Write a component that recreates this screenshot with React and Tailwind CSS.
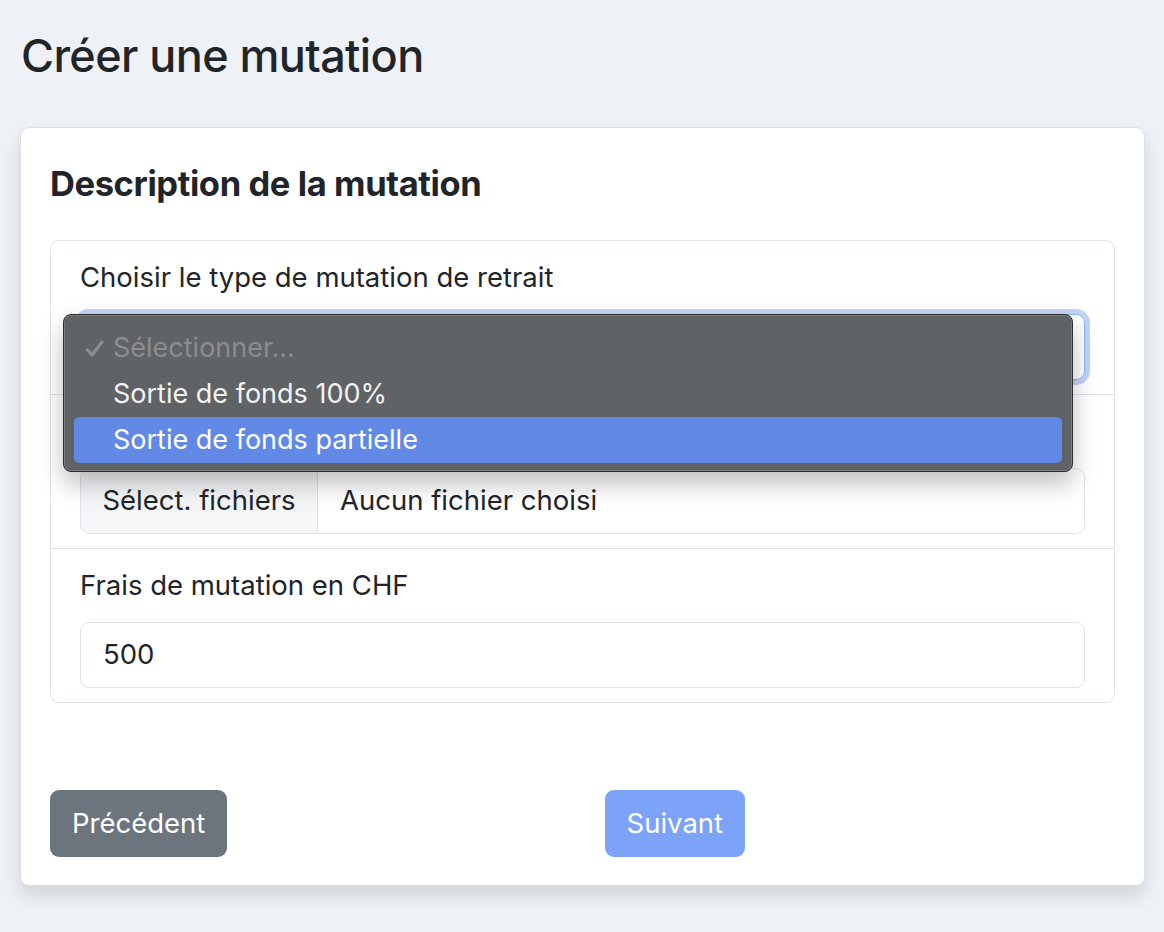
import React from "react";

export default function App() {
  return (
    <div className="min-h-[932px] w-[1164px] bg-[#eef1f5] text-[#212529] font-['Inter',sans-serif]">
      <div className="pl-[21px] pt-[28px]">
        <h1 className="text-[45px] leading-[55px] font-medium tracking-[-0.6px]">Créer une mutation</h1>
      </div>
      <div className="relative ml-[20px] mt-[44px] w-[1125px] rounded-[9px] border border-[#dcdfe3] bg-white px-[29px] pt-[36px] pb-[28px] shadow-[0_10px_18px_rgba(0,0,0,0.12)]">
        <h3 className="text-[34.5px] leading-[40px] font-bold tracking-[-0.4px]">Description de la mutation</h3>
        <div className="mt-[36px] rounded-[9px] border border-[#dee2e6]">
          {/* item 1 */}
          <div className="px-[29px] pt-[18px] pb-[14px]">
            <div className="text-[27.5px] leading-[36px]">Choisir le type de mutation de retrait</div>
            <div className="mt-[19px] h-[66px] rounded-[9px] border border-[#86b7fe] ring-[5px] ring-[#c3d3f3]"></div>
          </div>
          {/* item 2 */}
          <div className="border-t border-[#dee2e6] px-[29px] pt-[18px] pb-[14px]">
            <div className="invisible text-[27.5px] leading-[36px]">Documents</div>
            <div className="mt-[19px] flex h-[66px] overflow-hidden rounded-[9px] border border-[#dee2e6] text-[27.5px]">
              <div className="flex w-[237px] items-center justify-center border-r border-[#dee2e6] bg-[#f5f6f7]">Sélect. fichiers</div>
              <div className="flex items-center pl-[22px]">Aucun fichier choisi</div>
            </div>
          </div>
          {/* item 3 */}
          <div className="border-t border-[#dee2e6] px-[29px] pt-[18px] pb-[14px]">
            <div className="text-[27.5px] leading-[36px]">Frais de mutation en CHF</div>
            <div className="mt-[19px] flex h-[66px] items-center rounded-[9px] border border-[#dee2e6] pl-[22px] text-[27.5px]">500</div>
          </div>
        </div>
        <div className="mt-[87px] grid grid-cols-2">
          <div>
            <button className="h-[67px] rounded-[9px] bg-[#6c757d] px-[22px] text-[27.5px] text-white">Précédent</button>
          </div>
          <div className="pl-[22px]">
            <button className="h-[67px] rounded-[9px] bg-[#7ca3f7] px-[22px] text-[27.5px] text-white">Suivant</button>
          </div>
        </div>

        {/* open select dropdown */}
        <div className="absolute left-[42px] top-[186px] w-[1010px] rounded-[8px] border border-[#2e2f31] bg-[#606366] px-[10px] pt-[10px] pb-[8px] shadow-[0_12px_24px_rgba(0,0,0,0.25)] ring-1 ring-inset ring-[#7a7c7f]">
          <div className="flex h-[46px] items-center text-[27px] text-[#8b8d90]">
            <span className="flex w-[39px] items-center pl-[11px]">
              <svg width="19" height="17" viewBox="0 0 19 17" fill="none">
                <path d="M2 9.5 L7 15 L17 2" stroke="#8b8d90" strokeWidth="3" strokeLinecap="round" strokeLinejoin="round" />
              </svg>
            </span>
            <span>Sélectionner...</span>
          </div>
          <div className="flex h-[46px] items-center pl-[39px] text-[27px] text-[#f2f2f2]">Sortie de fonds 100%</div>
          <div className="flex h-[46px] items-center rounded-[5px] bg-[#6189e5] pl-[39px] text-[27px] text-white">Sortie de fonds partielle</div>
        </div>
      </div>
      <div className="h-[47px]"></div>
    </div>
  );
}
